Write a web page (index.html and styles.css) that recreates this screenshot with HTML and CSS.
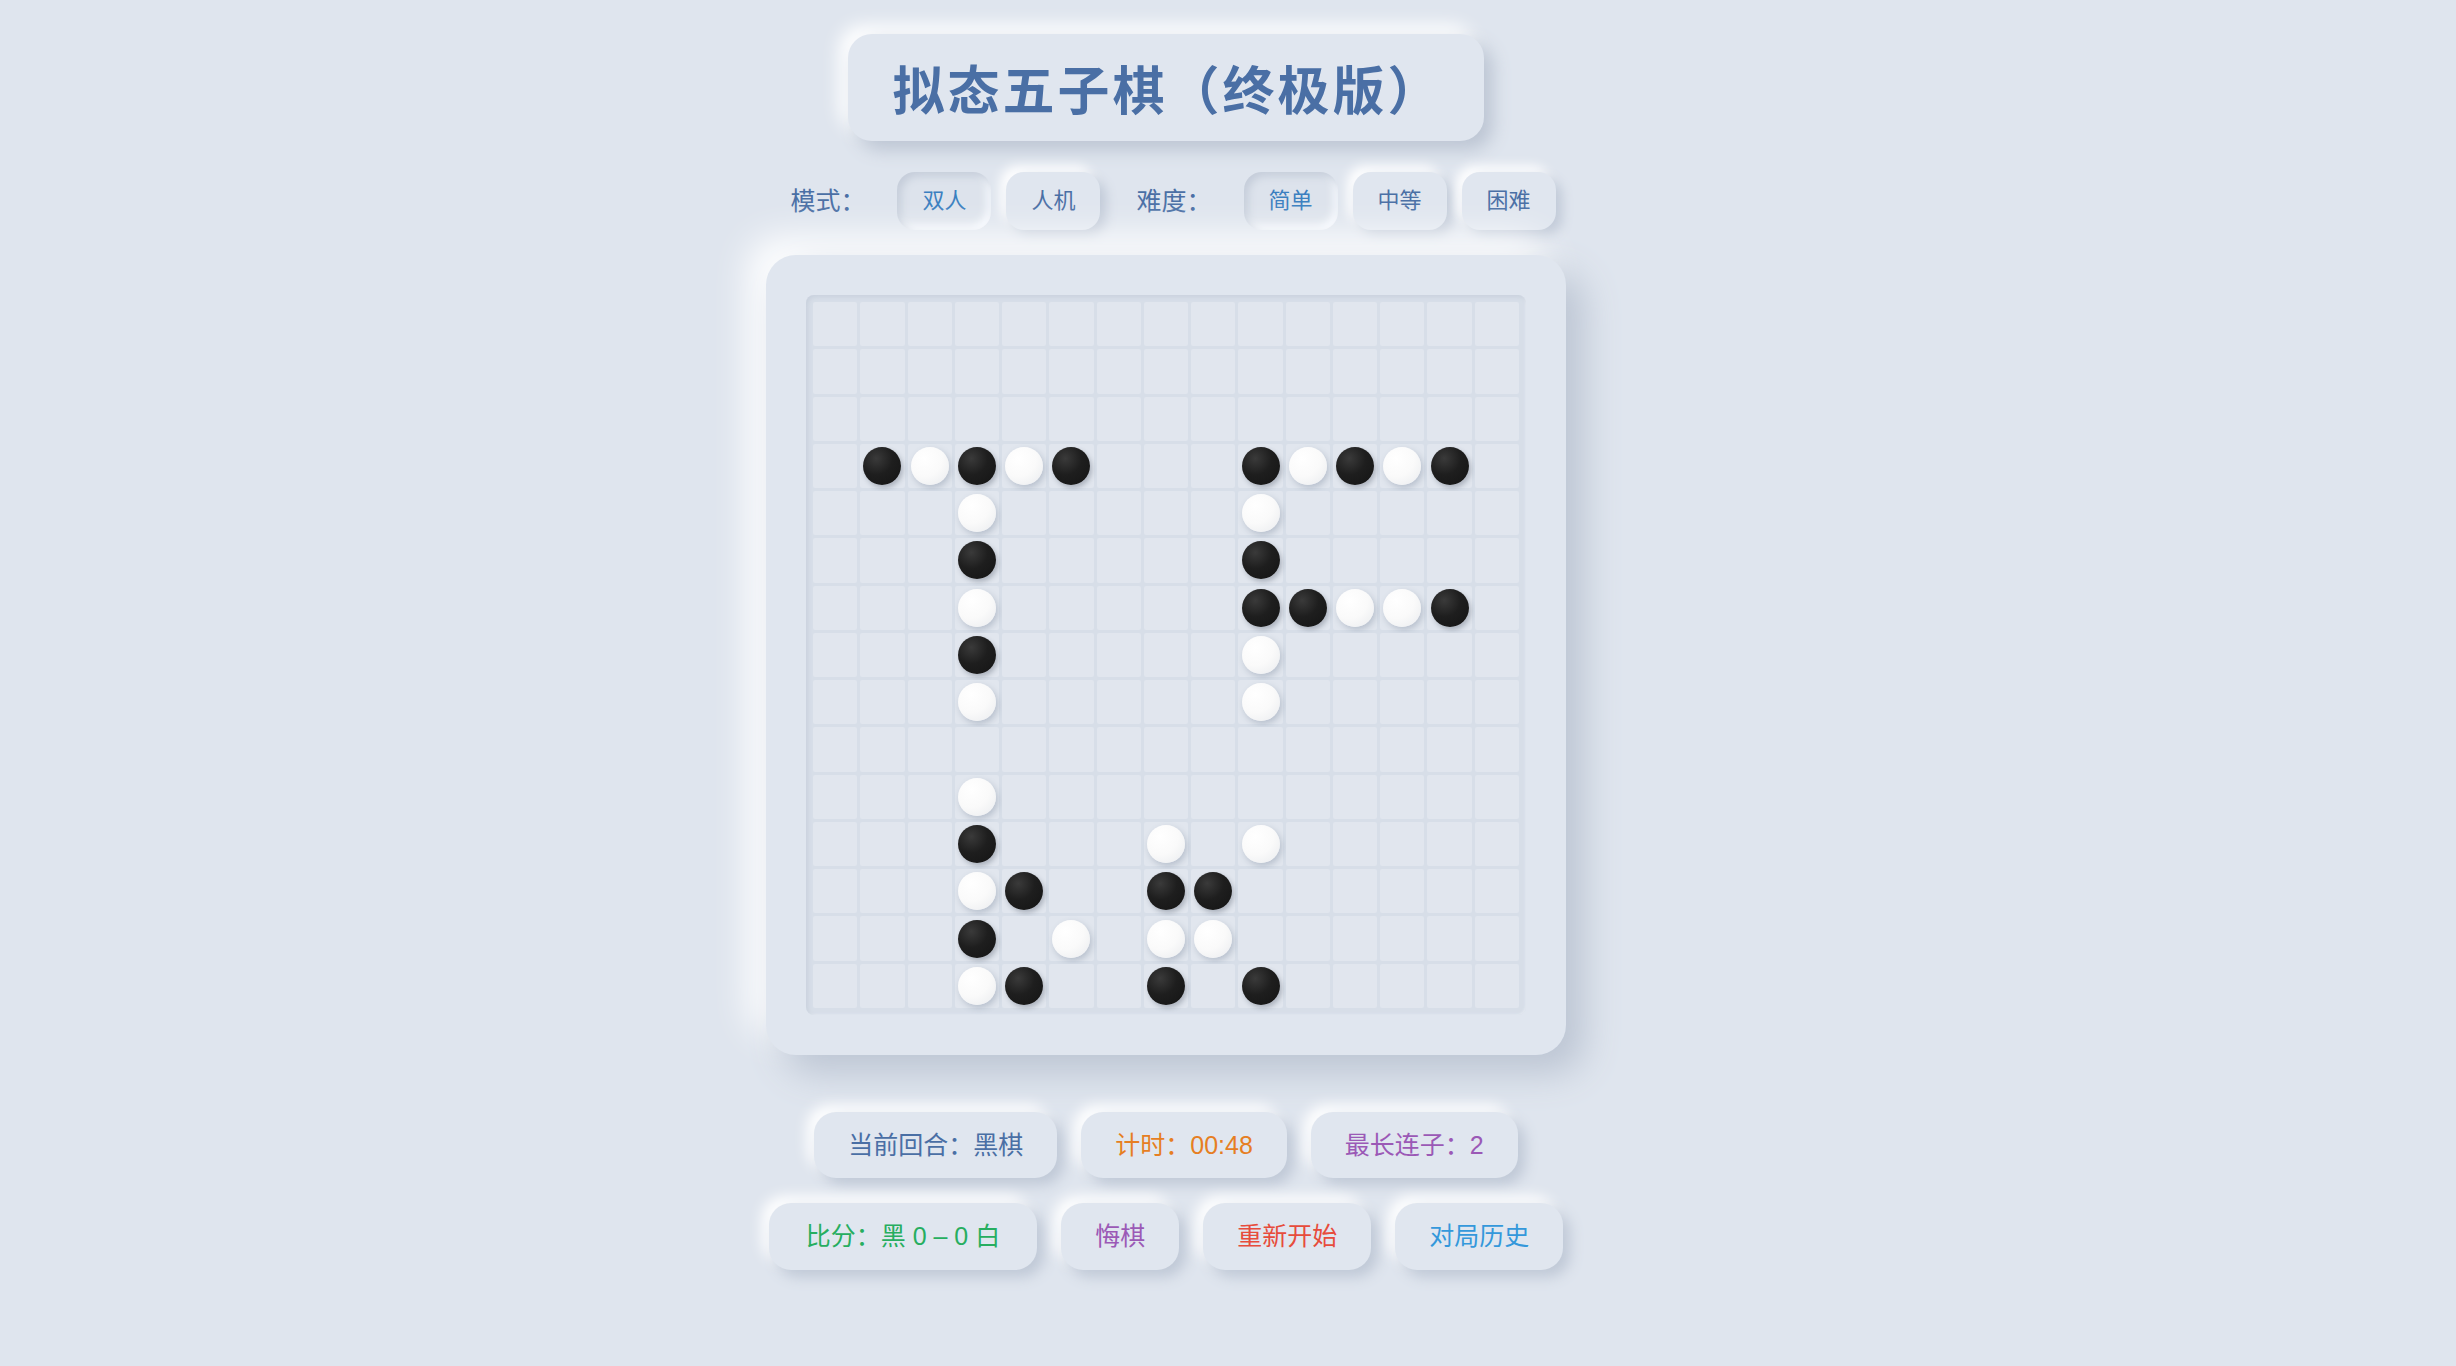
FILE: index.html
```html
<!DOCTYPE html>
<html lang="zh-CN">
<head>
<meta charset="utf-8">
<title>拟态五子棋（终极版）</title>
<link rel="stylesheet" href="styles.css">
</head>
<body>
<div class="app">
  <h1 class="title">拟态五子棋（终极版）</h1>

  <div class="mode-row">
    <span class="label">模式：</span>
    <button class="mode-btn active">双人</button>
    <button class="mode-btn">人机</button>
    <span class="label label-second">难度：</span>
    <button class="mode-btn active">简单</button>
    <button class="mode-btn">中等</button>
    <button class="mode-btn">困难</button>
  </div>

  <div class="board">
    <div class="grid">
      <i class="cell"></i><i class="cell"></i><i class="cell"></i><i class="cell"></i><i class="cell"></i><i class="cell"></i><i class="cell"></i><i class="cell"></i><i class="cell"></i><i class="cell"></i><i class="cell"></i><i class="cell"></i><i class="cell"></i><i class="cell"></i><i class="cell"></i>
      <i class="cell"></i><i class="cell"></i><i class="cell"></i><i class="cell"></i><i class="cell"></i><i class="cell"></i><i class="cell"></i><i class="cell"></i><i class="cell"></i><i class="cell"></i><i class="cell"></i><i class="cell"></i><i class="cell"></i><i class="cell"></i><i class="cell"></i>
      <i class="cell"></i><i class="cell"></i><i class="cell"></i><i class="cell"></i><i class="cell"></i><i class="cell"></i><i class="cell"></i><i class="cell"></i><i class="cell"></i><i class="cell"></i><i class="cell"></i><i class="cell"></i><i class="cell"></i><i class="cell"></i><i class="cell"></i>
      <i class="cell"></i><i class="cell"><b class="stone black"></b></i><i class="cell"><b class="stone white"></b></i><i class="cell"><b class="stone black"></b></i><i class="cell"><b class="stone white"></b></i><i class="cell"><b class="stone black"></b></i><i class="cell"></i><i class="cell"></i><i class="cell"></i><i class="cell"><b class="stone black"></b></i><i class="cell"><b class="stone white"></b></i><i class="cell"><b class="stone black"></b></i><i class="cell"><b class="stone white"></b></i><i class="cell"><b class="stone black"></b></i><i class="cell"></i>
      <i class="cell"></i><i class="cell"></i><i class="cell"></i><i class="cell"><b class="stone white"></b></i><i class="cell"></i><i class="cell"></i><i class="cell"></i><i class="cell"></i><i class="cell"></i><i class="cell"><b class="stone white"></b></i><i class="cell"></i><i class="cell"></i><i class="cell"></i><i class="cell"></i><i class="cell"></i>
      <i class="cell"></i><i class="cell"></i><i class="cell"></i><i class="cell"><b class="stone black"></b></i><i class="cell"></i><i class="cell"></i><i class="cell"></i><i class="cell"></i><i class="cell"></i><i class="cell"><b class="stone black"></b></i><i class="cell"></i><i class="cell"></i><i class="cell"></i><i class="cell"></i><i class="cell"></i>
      <i class="cell"></i><i class="cell"></i><i class="cell"></i><i class="cell"><b class="stone white"></b></i><i class="cell"></i><i class="cell"></i><i class="cell"></i><i class="cell"></i><i class="cell"></i><i class="cell"><b class="stone black"></b></i><i class="cell"><b class="stone black"></b></i><i class="cell"><b class="stone white"></b></i><i class="cell"><b class="stone white"></b></i><i class="cell"><b class="stone black"></b></i><i class="cell"></i>
      <i class="cell"></i><i class="cell"></i><i class="cell"></i><i class="cell"><b class="stone black"></b></i><i class="cell"></i><i class="cell"></i><i class="cell"></i><i class="cell"></i><i class="cell"></i><i class="cell"><b class="stone white"></b></i><i class="cell"></i><i class="cell"></i><i class="cell"></i><i class="cell"></i><i class="cell"></i>
      <i class="cell"></i><i class="cell"></i><i class="cell"></i><i class="cell"><b class="stone white"></b></i><i class="cell"></i><i class="cell"></i><i class="cell"></i><i class="cell"></i><i class="cell"></i><i class="cell"><b class="stone white"></b></i><i class="cell"></i><i class="cell"></i><i class="cell"></i><i class="cell"></i><i class="cell"></i>
      <i class="cell"></i><i class="cell"></i><i class="cell"></i><i class="cell"></i><i class="cell"></i><i class="cell"></i><i class="cell"></i><i class="cell"></i><i class="cell"></i><i class="cell"></i><i class="cell"></i><i class="cell"></i><i class="cell"></i><i class="cell"></i><i class="cell"></i>
      <i class="cell"></i><i class="cell"></i><i class="cell"></i><i class="cell"><b class="stone white"></b></i><i class="cell"></i><i class="cell"></i><i class="cell"></i><i class="cell"></i><i class="cell"></i><i class="cell"></i><i class="cell"></i><i class="cell"></i><i class="cell"></i><i class="cell"></i><i class="cell"></i>
      <i class="cell"></i><i class="cell"></i><i class="cell"></i><i class="cell"><b class="stone black"></b></i><i class="cell"></i><i class="cell"></i><i class="cell"></i><i class="cell"><b class="stone white"></b></i><i class="cell"></i><i class="cell"><b class="stone white"></b></i><i class="cell"></i><i class="cell"></i><i class="cell"></i><i class="cell"></i><i class="cell"></i>
      <i class="cell"></i><i class="cell"></i><i class="cell"></i><i class="cell"><b class="stone white"></b></i><i class="cell"><b class="stone black"></b></i><i class="cell"></i><i class="cell"></i><i class="cell"><b class="stone black"></b></i><i class="cell"><b class="stone black"></b></i><i class="cell"></i><i class="cell"></i><i class="cell"></i><i class="cell"></i><i class="cell"></i><i class="cell"></i>
      <i class="cell"></i><i class="cell"></i><i class="cell"></i><i class="cell"><b class="stone black"></b></i><i class="cell"></i><i class="cell"><b class="stone white"></b></i><i class="cell"></i><i class="cell"><b class="stone white"></b></i><i class="cell"><b class="stone white"></b></i><i class="cell"></i><i class="cell"></i><i class="cell"></i><i class="cell"></i><i class="cell"></i><i class="cell"></i>
      <i class="cell"></i><i class="cell"></i><i class="cell"></i><i class="cell"><b class="stone white"></b></i><i class="cell"><b class="stone black"></b></i><i class="cell"></i><i class="cell"></i><i class="cell"><b class="stone black"></b></i><i class="cell"></i><i class="cell"><b class="stone black"></b></i><i class="cell"></i><i class="cell"></i><i class="cell"></i><i class="cell"></i><i class="cell"></i>
    </div>
  </div>

  <div class="status-row">
    <div class="pill turn">当前回合：黑棋</div>
    <div class="pill timer">计时：00:48</div>
    <div class="pill streak">最长连子：2</div>
  </div>

  <div class="action-row">
    <div class="pill score">比分：黑 0 – 0 白</div>
    <button class="pill undo">悔棋</button>
    <button class="pill restart">重新开始</button>
    <button class="pill history">对局历史</button>
  </div>
</div>
</body>
</html>
```

FILE: styles.css
```css
html, body {
  margin: 0;
  padding: 0;
  background: #dfe5ee;
}

body {
  font-family: "Liberation Sans", "Noto Sans CJK SC", sans-serif;
  color: #4a6fa5;
  min-height: 1366px;
}

.app {
  width: 2332px;
  display: flex;
  flex-direction: column;
  align-items: center;
  padding-top: 34px;
  padding-bottom: 90px;
}

.title {
  margin: 0;
  font-family: "Noto Sans CJK SC", sans-serif;
  font-size: 52px;
  line-height: 75px;
  letter-spacing: 3px;
  font-weight: 700;
  color: #4a6fa5;
  padding: 16px 41px 16px 44px;
  border-radius: 24px;
  background: #e0e6ef;
  box-shadow: 9px 9px 18px #bcc5d3, -9px -9px 18px #ffffff;
}

.mode-row {
  margin-top: 31px;
  display: flex;
  align-items: center;
  gap: 15px;
  padding-left: 14px;
}

.label {
  font-size: 25px;
  line-height: 32px;
  color: #4a6fa5;
  margin-right: 17px;
}

.label-second {
  margin-left: 21px;
}

button {
  font-family: inherit;
  border: none;
  cursor: pointer;
}

.mode-btn {
  font-size: 22px;
  line-height: 32px;
  padding: 13px 25px;
  border-radius: 18px;
  background: #e0e6ef;
  color: #4a6fa5;
  box-shadow: 6px 6px 12px #c0c9d7, -6px -6px 12px #ffffff;
}

.mode-btn.active {
  color: #3a7fc0;
  background: #dde3ec;
  box-shadow: inset 4px 4px 8px #c4ccd9, inset -4px -4px 8px #f8fbff;
}

.board {
  margin-top: 25px;
  width: 800px;
  height: 800px;
  box-sizing: border-box;
  padding: 40px;
  border-radius: 30px;
  background: #e0e6ef;
  box-shadow: 18px 18px 36px #bcc5d3, -18px -18px 36px #ffffff;
}

.grid {
  width: 720px;
  height: 720px;
  box-sizing: border-box;
  padding: 7px;
  border-radius: 8px;
  background: #d7dee8;
  box-shadow: inset 2px 2px 4px #c9d1dd, inset -1px -1px 2px #e6ebf2;
  display: grid;
  grid-template-columns: repeat(15, 1fr);
  grid-template-rows: repeat(15, 1fr);
  gap: 3px;
}

.cell {
  display: flex;
  align-items: center;
  justify-content: center;
  background: #e1e6ee;
  border-radius: 2px;
}

.stone {
  width: 38px;
  height: 38px;
  border-radius: 50%;
}

.stone.black {
  background: radial-gradient(circle at 35% 30%, #3a3a3a 0%, #1e1e1e 45%, #141414 100%);
  box-shadow: 2px 3px 5px rgba(40, 50, 70, 0.28);
}

.stone.white {
  background: radial-gradient(circle at 35% 30%, #ffffff 0%, #fafafa 50%, #e9ebee 100%);
  box-shadow: 2px 3px 6px rgba(90, 105, 130, 0.3);
}

.status-row {
  margin-top: 57px;
  display: flex;
  gap: 24px;
}

.action-row {
  margin-top: 25px;
  display: flex;
  gap: 24px;
}

.pill {
  font-family: inherit;
  font-size: 25px;
  line-height: 36px;
  padding: 15px 34px;
  border-radius: 22px;
  background: #e0e6ef;
  box-shadow: 7px 7px 14px #bfc8d6, -7px -7px 14px #ffffff;
  white-space: nowrap;
}

.action-row .pill {
  line-height: 37px;
}

.score {
  padding-left: 37px;
  padding-right: 37px;
}

.turn { color: #4a6fa5; }
.timer { color: #e67e22; }
.streak { color: #9b59b6; }
.score { color: #27ae60; }
.undo { color: #9b59b6; }
.restart { color: #e74c3c; }
.history { color: #3498db; }
```
